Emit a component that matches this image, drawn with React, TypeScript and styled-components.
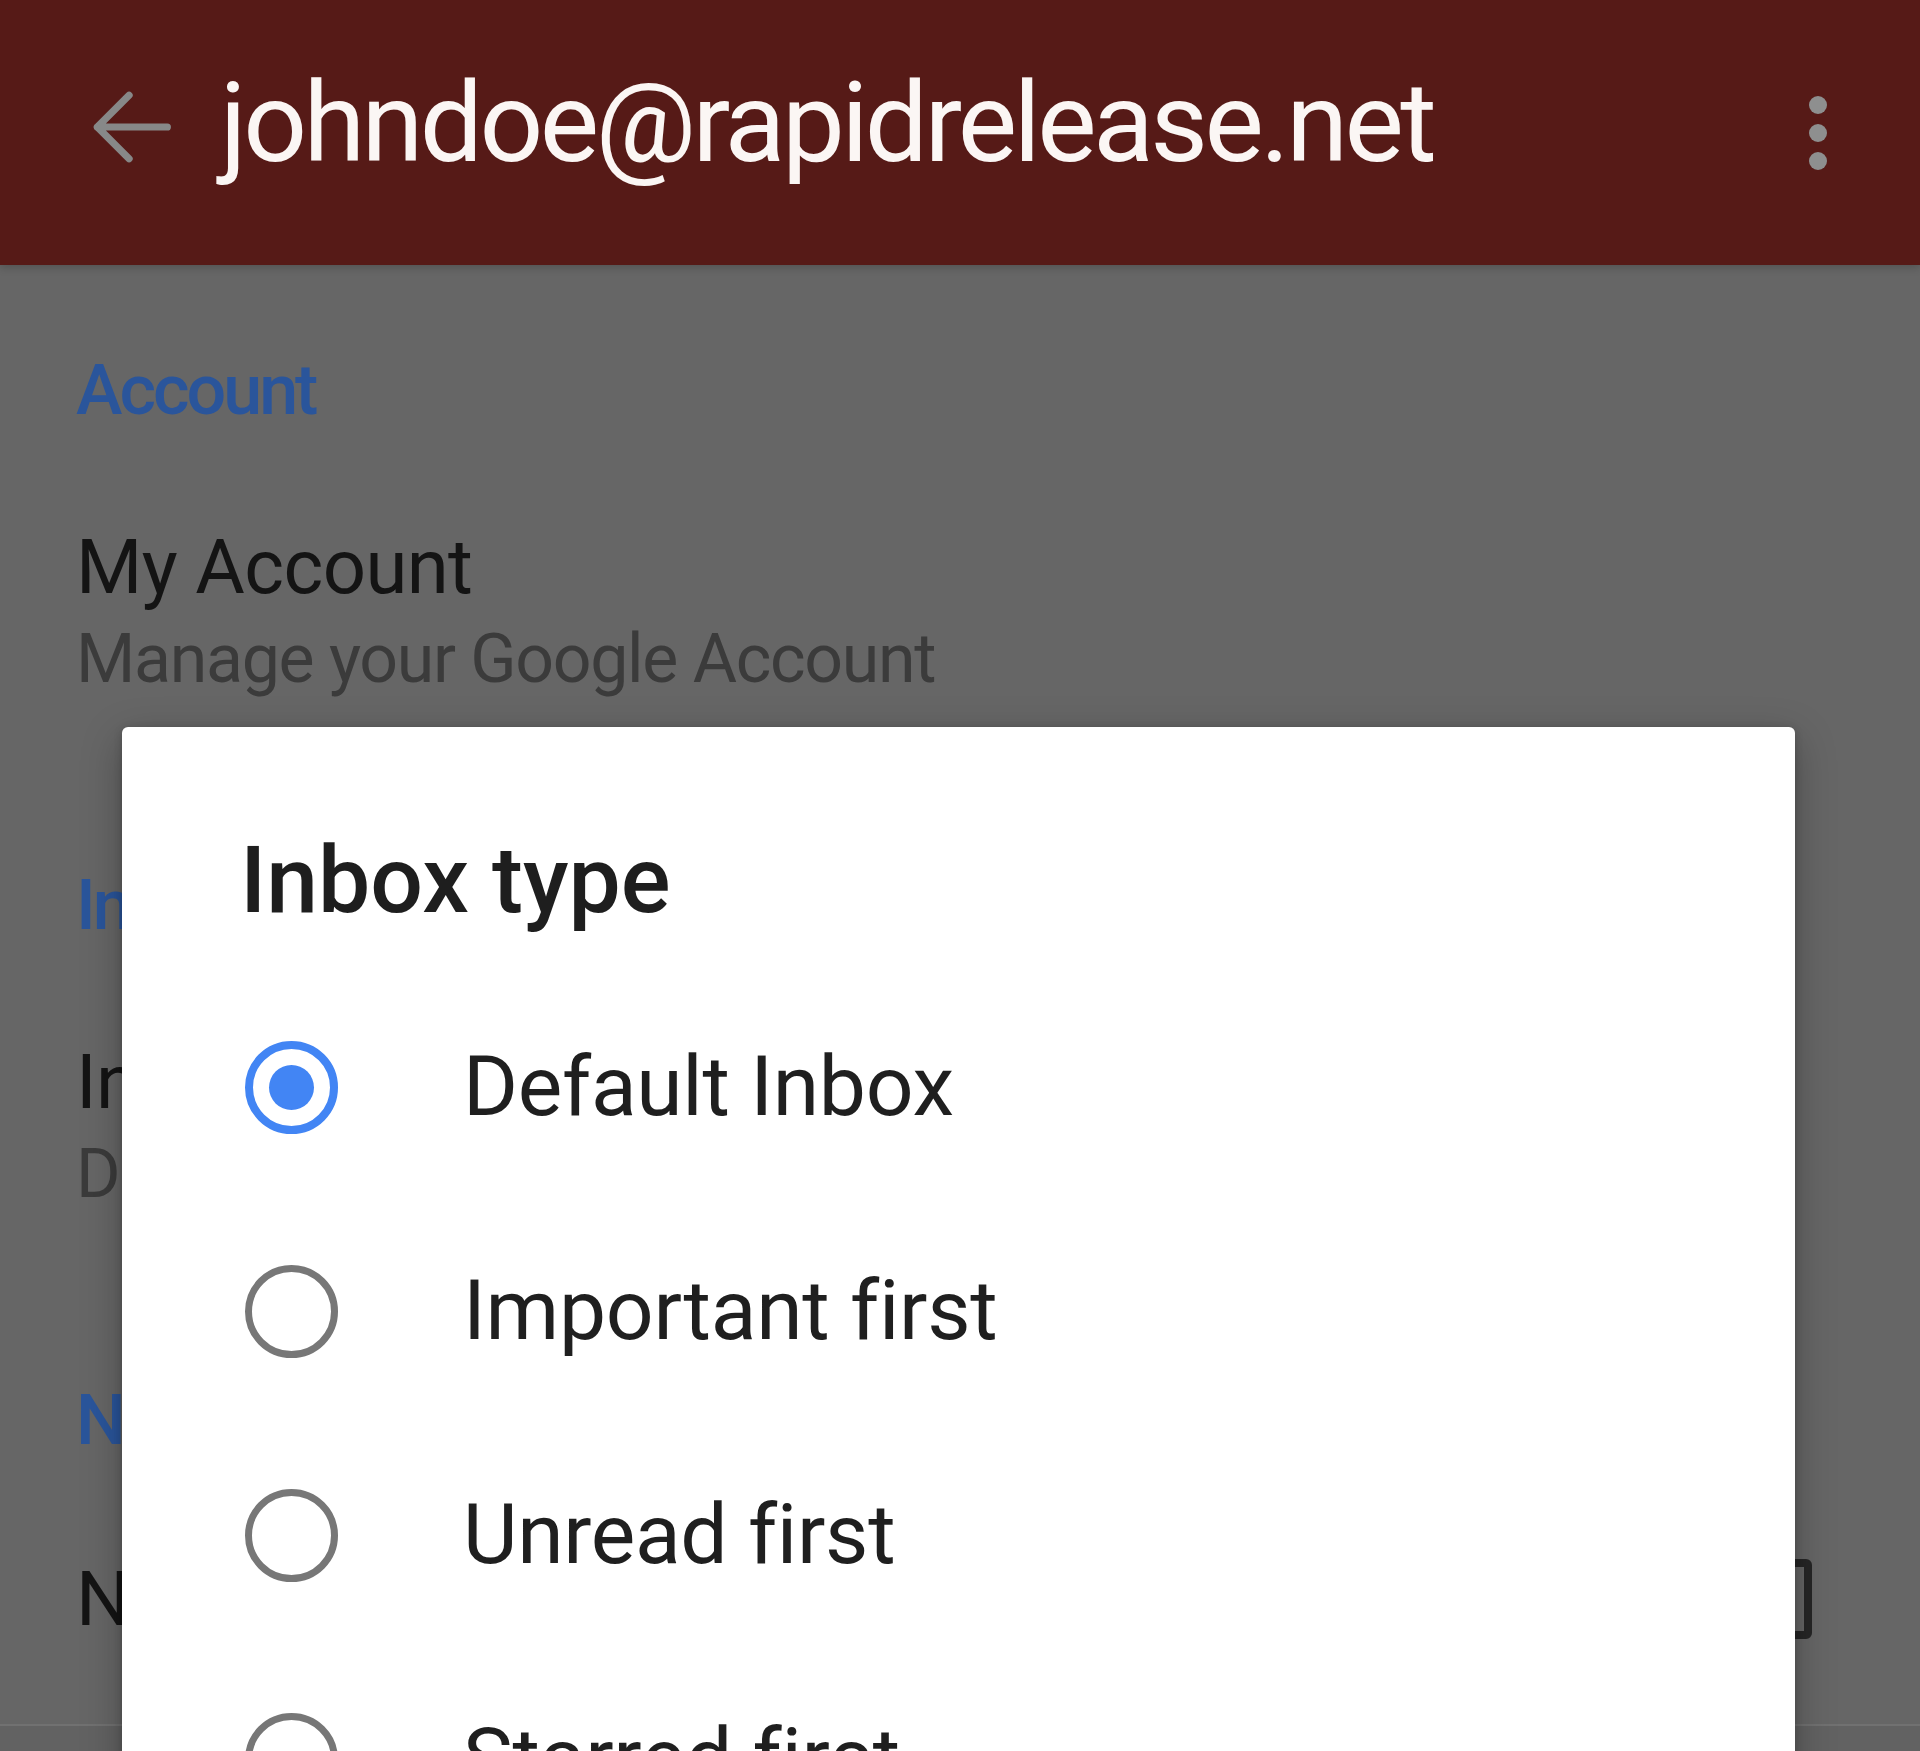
import React from "react";
import styled, { createGlobalStyle } from "styled-components";

const Global = createGlobalStyle`
  html, body { margin: 0; padding: 0; }
  body { background: #666666; font-family: Roboto, "Noto Sans", "Liberation Sans", sans-serif; }
  * { box-sizing: border-box; }
`;

const Screen = styled.div`
  position: relative;
  width: 1920px;
  height: 1751px;
  overflow: hidden;
  background: #666666;
`;

const AppBar = styled.header`
  height: 265px;
  background: #561a17;
  display: flex;
  align-items: center;
  padding: 0 0 12px 0;
  box-shadow: 0 3px 8px rgba(0, 0, 0, 0.18);
  position: relative;
  z-index: 1;
`;

const IconSlot = styled.div<{ $w: number; $ml: number }>`
  width: ${(p) => p.$w}px;
  margin-left: ${(p) => p.$ml}px;
  display: flex;
  align-items: center;
  justify-content: center;
  flex: none;
`;

const Title = styled.h1`
  margin: 0 0 8px 34px;
  flex: 1;
  font-family: Roboto, "Noto Sans", sans-serif;
  font-weight: 400;
  font-size: 112px;
  line-height: 1;
  letter-spacing: -3.6px;
  color: #fbf6f4;
  white-space: nowrap;
`;

const Dots = styled.div`
  display: flex;
  flex-direction: column;
  gap: 10px;
  margin: 12px 93px 0 0;
`;

const Dot = styled.span`
  width: 18px;
  height: 18px;
  border-radius: 50%;
  background: #8e8f8f;
`;

const List = styled.main`
  padding-top: 90px;
`;

const SectionHeader = styled.div`
  padding-left: 76px;
  font-size: 70px;
  line-height: 1;
  font-weight: 500;
  letter-spacing: -3px;
  color: #2a559b;
  height: 70px;
  white-space: nowrap;
`;

const Item = styled.div<{ $pb: number; $divider?: boolean }>`
  display: flex;
  align-items: center;
  justify-content: space-between;
  padding: 104px 108px ${(p) => p.$pb}px 76px;
  border-bottom: ${(p) => (p.$divider ? "2px solid #717171" : "none")};
`;

const ItemText = styled.div`
  display: flex;
  flex-direction: column;
  gap: 20px;
`;

const ItemTitle = styled.div`
  font-size: 76px;
  line-height: 1;
  letter-spacing: -0.6px;
  color: #141414;
  white-space: nowrap;
`;

const ItemSub = styled.div`
  font-size: 68px;
  line-height: 1;
  letter-spacing: -1.3px;
  color: #3b3b3b;
  white-space: nowrap;
`;

const Checkbox = styled.span`
  width: 80px;
  height: 80px;
  border: 8px solid #262626;
  border-radius: 6px;
  flex: none;
`;

const Below = styled.div`
  background: #626262;
  height: 400px;
`;

const Dialog = styled.section`
  position: absolute;
  left: 122px;
  top: 727px;
  width: 1673px;
  height: 1200px;
  background: #ffffff;
  border-radius: 6px;
  box-shadow: 0 12px 40px rgba(0, 0, 0, 0.28), 0 2px 8px rgba(0, 0, 0, 0.2);
  padding: 107px 0 0 0;
  z-index: 2;
`;

const DialogTitle = styled.h2`
  margin: 0 0 48px 118px;
  font-size: 93px;
  line-height: 1;
  font-weight: 500;
  color: #1e1e1e;
  white-space: nowrap;
`;

const Option = styled.label`
  height: 224px;
  display: flex;
  align-items: center;
  padding-left: 123px;
  gap: 125px;
`;

const Radio = styled.span<{ $on?: boolean }>`
  width: 93px;
  height: 93px;
  border-radius: 50%;
  border: ${(p) => (p.$on ? "8px solid #4285f4" : "7px solid #777777")};
  display: flex;
  align-items: center;
  justify-content: center;
  flex: none;
  &::after {
    content: "";
    display: ${(p) => (p.$on ? "block" : "none")};
    width: 45px;
    height: 45px;
    border-radius: 50%;
    background: #4285f4;
  }
`;

const OptionText = styled.span`
  font-size: 84px;
  line-height: 1;
  letter-spacing: -0.3px;
  color: #1f1f1f;
  white-space: nowrap;
`;

const options = ["Default Inbox", "Important first", "Unread first", "Starred first"];

export default function App() {
  return (
    <Screen>
      <Global />
      <AppBar>
        <IconSlot $w={112} $ml={74}>
          <svg width="112" height="112" viewBox="0 0 24 24" fill="none">
            <path
              d="M20 12H5M11.8 5.2L5 12l6.8 6.8"
              stroke="#878888"
              strokeWidth="1.55"
              strokeLinecap="round"
              strokeLinejoin="round"
            />
          </svg>
        </IconSlot>
        <Title>johndoe@rapidrelease.net</Title>
        <Dots>
          <Dot />
          <Dot />
          <Dot />
        </Dots>
      </AppBar>
      <List>
        <SectionHeader>Account</SectionHeader>
        <Item $pb={177}>
          <ItemText>
            <ItemTitle>My Account</ItemTitle>
            <ItemSub>Manage your Google Account</ItemSub>
          </ItemText>
        </Item>
        <SectionHeader>Inbox</SectionHeader>
        <Item $pb={177}>
          <ItemText>
            <ItemTitle>Inbox type</ItemTitle>
            <ItemSub>Default Inbox</ItemSub>
          </ItemText>
        </Item>
        <SectionHeader>Notifications</SectionHeader>
        <Item $pb={85} $divider>
          <ItemText>
            <ItemTitle>Notifications</ItemTitle>
          </ItemText>
          <Checkbox />
        </Item>
        <Below />
      </List>
      <Dialog>
        <DialogTitle>Inbox type</DialogTitle>
        {options.map((o, i) => (
          <Option key={o}>
            <Radio $on={i === 0} />
            <OptionText>{o}</OptionText>
          </Option>
        ))}
      </Dialog>
    </Screen>
  );
}
